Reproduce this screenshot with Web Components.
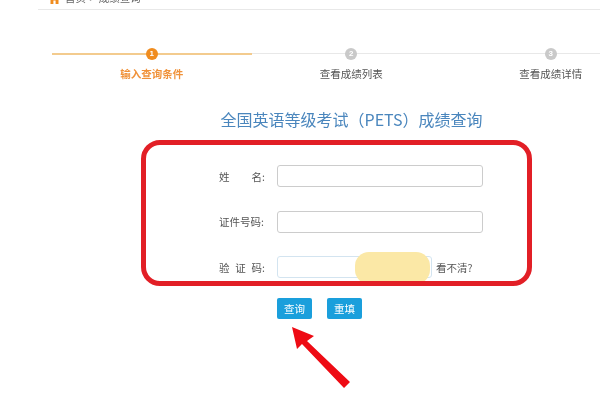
<!DOCTYPE html>
<html lang="zh">
<head>
<meta charset="utf-8">
<title>成绩查询</title>
<style>
  html, body { margin: 0; height: 100%; background: #fff; overflow: hidden; }
  body { font-family: "Noto Sans CJK SC", "Liberation Sans", sans-serif; }
</style>
</head>
<body>
<pets-page>
  <crumb-bar></crumb-bar>
  <step-bar>
    <step-item num="1" active>输入查询条件</step-item>
    <step-item num="2">查看成绩列表</step-item>
    <step-item num="3">查看成绩详情</step-item>
  </step-bar>
  <query-form></query-form>
</pets-page>

<script>
class PetsPage extends HTMLElement {
  constructor() {
    super();
    this.attachShadow({mode: 'open'});
    this.shadowRoot.innerHTML = `
      <style>
        :host { display: block; position: relative; width: 600px; height: 400px; overflow: hidden; filter: blur(.3px); }
        .frame { position: absolute; left: 141px; top: 140px; width: 391px; height: 146px; box-sizing: border-box;
                 border: 5.5px solid #e21f26; border-radius: 19px; }
        .blob { position: absolute; left: 355px; top: 252px; width: 75px; height: 32px; background: #fbe8a6; border-radius: 14px; }
        svg { position: absolute; left: 285px; top: 320px; }
      </style>
      <slot></slot>
      <div class="blob"></div>
      <div class="frame"></div>
      <svg width="70" height="72" viewBox="285 320 70 72">
        <polygon fill="#ee0b14" points="292,327 314,336 307,341 350,382 344,388 302,344 297,349"/>
      </svg>`;
  }
}

class CrumbBar extends HTMLElement {
  constructor() {
    super();
    this.attachShadow({mode: 'open'});
    this.shadowRoot.innerHTML = `
      <style>
        :host { display: block; height: 9px; margin-left: 38px; border-bottom: 1px solid #e8e8e8; }
        .row { position: relative; top: -8px; display: flex; align-items: center; gap: 3.5px; height: 12px; padding-left: 11px;
               font-size: 10.5px; line-height: 12px; color: #666; }
        svg { flex: none; margin-right: 1.5px; }
      </style>
      <div class="row">
        <svg width="11" height="11" viewBox="0 0 11 11"><path fill="#f08c1e" d="M5.5 0 11 5.2H9.5V11H6.6V7.4H4.4V11H1.5V5.2H0z"/></svg>
        <span>首页</span><span>&gt;</span><span>成绩查询</span>
      </div>`;
  }
}

class StepBar extends HTMLElement {
  constructor() {
    super();
    this.attachShadow({mode: 'open'});
    this.shadowRoot.innerHTML = `
      <style>
        :host { display: grid; grid-template-columns: repeat(3, 199.5px); margin: 38px 0 0 52px; width: 600px; }
      </style>
      <slot></slot>`;
  }
}

class StepItem extends HTMLElement {
  constructor() {
    super();
    this.attachShadow({mode: 'open'});
    this.shadowRoot.innerHTML = `
      <style>
        :host { display: flex; flex-direction: column; align-items: center; color: #555; font-size: 10.5px; --tone: #e8e8e8; --dot: #c9c9c9; --thick: 1px; }
        :host([active]) { color: #f0923a; font-weight: 700; --tone: #f3cb8e; --dot: #f08c1e; --thick: 2px; }
        .track { position: relative; align-self: stretch; display: flex; justify-content: center; height: 12px; }
        .track::before { content: ""; position: absolute; left: 0; right: 0; top: 5px; height: var(--thick); background: var(--tone); }
        .dot { position: relative; width: 12px; height: 12px; border-radius: 50%; background: var(--dot); color: #fff;
               font: 700 8px/12px "Liberation Sans", sans-serif; text-align: center; }
        .text { margin-top: 7px; line-height: 14px; }
      </style>
      <div class="track"><div class="dot">${this.getAttribute('num')}</div></div>
      <div class="text"><slot></slot></div>`;
  }
}

class QueryForm extends HTMLElement {
  constructor() {
    super();
    this.attachShadow({mode: 'open'});
    this.shadowRoot.innerHTML = `
      <style>
        :host { display: block; margin-left: 52px; width: 599px; }
        h1 { margin: 26px 0 0; font-size: 16px; font-weight: 400; line-height: 24px; text-align: center; color: #4a86bd; }
        .rows { display: grid; row-gap: 23.5px; margin: 34px 0 0 167px; }
        .btns { display: flex; gap: 15px; margin: 20px 0 0 225px; }
      </style>
      <h1>全国英语等级考试（PETS）成绩查询</h1>
      <div class="rows">
        <form-row label="姓 名:"></form-row>
        <form-row label="证件号码:"></form-row>
        <form-row label="验 证 码:" short hint="看不清?"></form-row>
      </div>
      <div class="btns">
        <blue-btn>查询</blue-btn>
        <blue-btn>重填</blue-btn>
      </div>`;
  }
}

class FormRow extends HTMLElement {
  constructor() {
    super();
    this.attachShadow({mode: 'open'});
    const parts = this.getAttribute('label').split(' ').map(t => `<span>${t}</span>`).join('');
    const hint = this.getAttribute('hint');
    this.shadowRoot.innerHTML = `
      <style>
        :host { display: flex; align-items: center; height: 22px; font-size: 10.5px; color: #555; }
        label { display: flex; justify-content: space-between; width: 46px; margin-right: 12px; }
        input { box-sizing: border-box; width: 206px; height: 22px; margin: 0; padding: 0 6px; background: #fff;
                border: 1px solid #ccc; border-radius: 3px; outline: none; }
        :host([short]) input { width: 155px; border-color: #d3e4f0; }
        .hint { margin-left: 4px; }
      </style>
      <label>${parts}</label>
      <input type="text">
      ${hint ? `<span class="hint">${hint}</span>` : ''}`;
  }
}

class BlueBtn extends HTMLElement {
  constructor() {
    super();
    this.attachShadow({mode: 'open'});
    this.shadowRoot.innerHTML = `
      <style>
        :host { display: block; width: 35px; height: 21px; border-radius: 2px; background: #1a9fdc; color: #fff;
                font-size: 10.5px; line-height: 21px; text-align: center; }
      </style>
      <slot></slot>`;
  }
}

customElements.define('pets-page', PetsPage);
customElements.define('crumb-bar', CrumbBar);
customElements.define('step-bar', StepBar);
customElements.define('step-item', StepItem);
customElements.define('query-form', QueryForm);
customElements.define('form-row', FormRow);
customElements.define('blue-btn', BlueBtn);
</script>
</body>
</html>
